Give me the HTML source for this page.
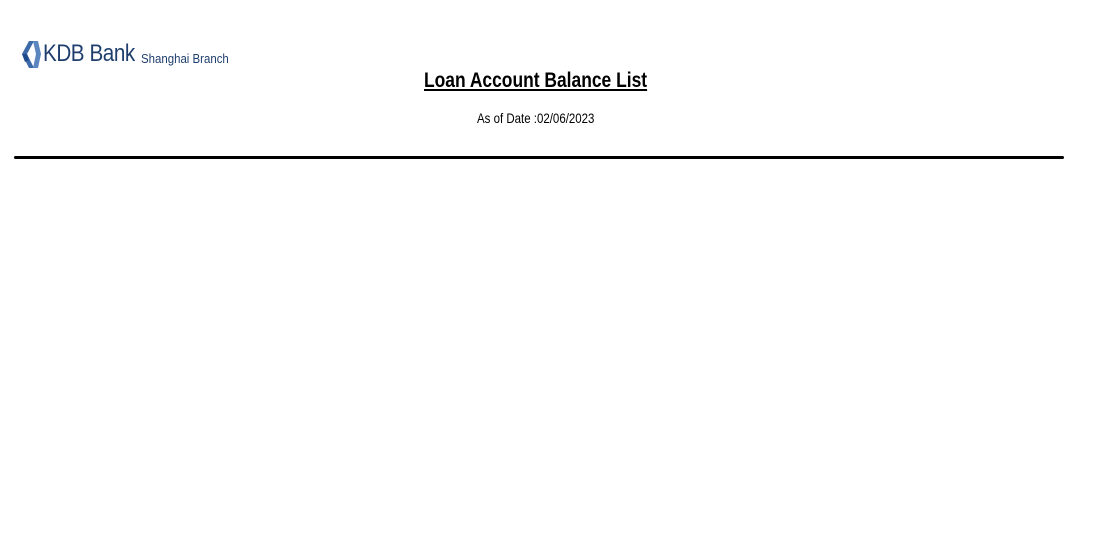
<!DOCTYPE html>
<html><head><style>
body{margin:0;width:1095px;height:540px;background:#fff;position:relative;overflow:hidden;font-family:"Liberation Sans",sans-serif}
.a{position:absolute;white-space:nowrap}
</style></head><body>
<svg class="a" style="left:19px;top:40px" width="24" height="29" viewBox="0 0 24 29">
<path d="M10 1 L15 1 L8 14 L15 28 L10 28 L3 14 Z" fill="#3d6aa8"/>
<path d="M14 1 L19 1 L22 14 L19 28 L14 28 L17 14 Z" fill="#5b86c0"/>
<path d="M3 14 L8 14 L10 20 L6 22 Z" fill="#1e4b8a"/>
</svg>
<div class="a" style="left:43px;top:40px;font-size:24px;color:#1f3e6d;letter-spacing:-0.5px;transform:scaleX(0.86);transform-origin:0 0">KDB Bank</div>
<div class="a" style="left:141px;top:51px;font-size:13px;color:#1f3e6d;transform:scaleX(0.88);transform-origin:0 0">Shanghai Branch</div>
<div class="a" style="left:424px;top:69px;font-size:21px;font-weight:bold;text-decoration:underline;color:#000;transform:scaleX(0.83);transform-origin:0 0">Loan Account Balance List</div>
<div class="a" style="left:477px;top:110px;font-size:14px;color:#000;transform:scaleX(0.82);transform-origin:0 0">As of Date :02/06/2023</div>
<div class="a" style="left:14px;top:156px;width:1050px;height:3px;background:#000;border-radius:2px"></div>
</body></html>
